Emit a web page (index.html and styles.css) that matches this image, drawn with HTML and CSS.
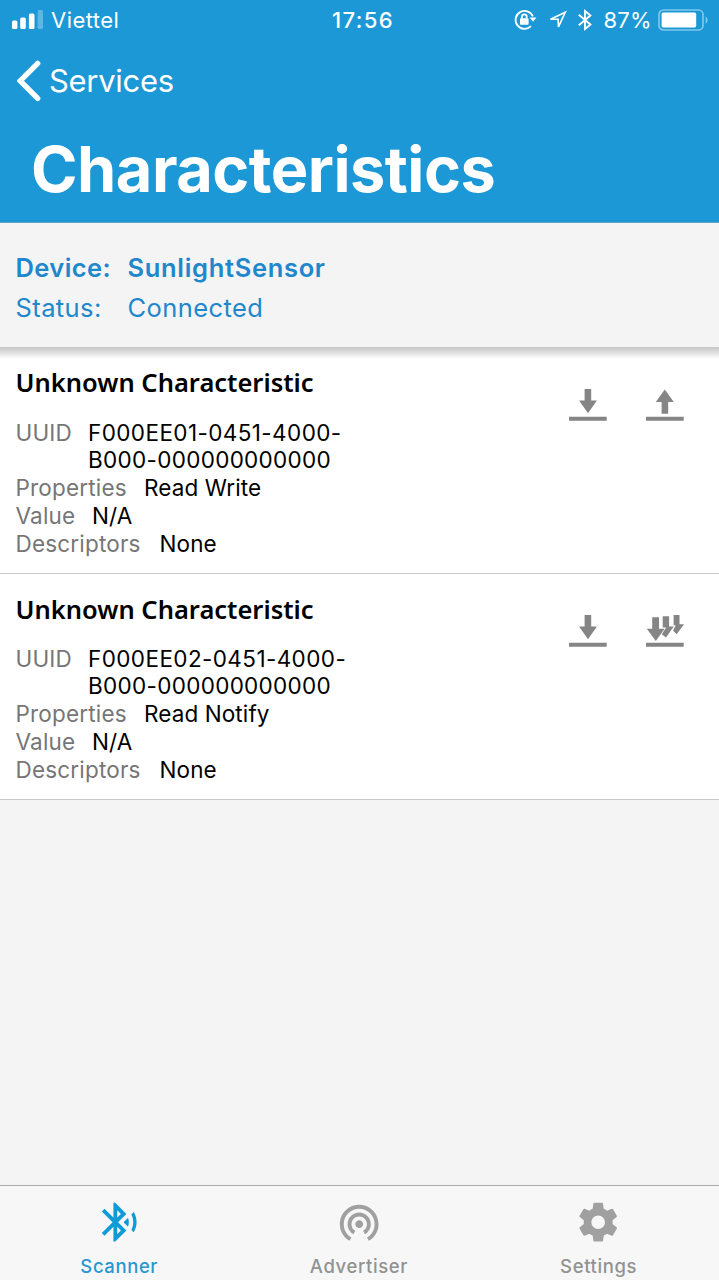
FILE: index.html
```html
<!DOCTYPE html>
<html lang="en">
<head>
<meta charset="utf-8">
<meta name="viewport" content="width=device-width, initial-scale=1">
<title>Characteristics</title>
<link rel="stylesheet" href="styles.css">
</head>
<body>
<div class="app">
  <header class="header">
    <div class="statusbar">
      <div class="carrier">
        <svg class="signal" width="32" height="20" viewBox="0 0 32 20" fill="#fff"><rect x="0" y="10.5" width="5.4" height="8.5" rx="1.5"/><rect x="8.2" y="7.5" width="5.6" height="11.5" rx="1.5"/><rect x="16.9" y="3.5" width="5.6" height="15.5" rx="1.5"/><rect x="25.6" y="0" width="5.4" height="19" rx="1.5" opacity=".3"/></svg>
        <span class="carrier-name">Viettel</span>
      </div>
      <div class="time">17:56</div>
      <div class="indicators">
        <svg class="lock" width="23" height="22" viewBox="0 0 23 22" fill="none" stroke="#fff" stroke-width="1.8"><path d="M18.9 7.4A9 9 0 1 0 17 17.2"/><path d="M15.6 8.4h6.8l-3.3 4.4z" fill="#fff" stroke="none"/><rect x="6" y="9.2" width="8.6" height="6.5" rx=".8" fill="#fff" stroke="none"/><path d="M7.9 9.5V7.7a2.4 2.4 0 0 1 4.8 0v1.8"/></svg>
        <svg class="location" width="20" height="20" viewBox="0 0 20 20" fill="none" stroke="#fff" stroke-width="1.6" stroke-linejoin="miter"><path d="M17.3 2.2 2.4 9.3h7.7l.4 7.6z"/></svg>
        <svg class="bt" width="14" height="22" viewBox="0 0 14 22" fill="none" stroke="#fff" stroke-width="1.9"><path d="M.8 5.8 12.4 15.6 7 20V2l5.4 4.4L.8 16.2"/></svg>
        <span class="percent">87%</span>
        <svg class="battery" width="51" height="22" viewBox="0 0 51 22"><rect x="1" y="1" width="44" height="20" rx="4.5" fill="none" stroke="#fff" stroke-opacity=".45" stroke-width="1.7"/><rect x="3.6" y="3.6" width="34.6" height="14.8" rx="1.6" fill="#fff"/><path d="M47.6 7.4c2.6 1 2.6 6.2 0 7.2z" fill="#fff" opacity=".45"/></svg>
      </div>
    </div>
    <div class="navbar">
      <svg class="chevron" width="25" height="42" viewBox="0 0 25 42" fill="none" stroke="#fff" stroke-width="5.4" stroke-linecap="round" stroke-linejoin="miter"><path d="M20.7 3.3 3.2 20.8 20.7 38.3"/></svg>
      <span class="back">Services</span>
    </div>
    <h1 class="title">Characteristics</h1>
  </header>

  <section class="device">
    <div class="device-row device-name"><span class="device-key">Device:</span><span class="device-value">SunlightSensor</span></div>
    <div class="device-row device-status"><span class="device-key">Status:</span><span class="device-value">Connected</span></div>
  </section>

  <main class="list">
    <article class="card">
      <div class="info">
        <h2 class="name">Unknown Characteristic</h2>
        <div class="row uuid"><span class="key k-uuid">UUID</span><span class="val">F000EE01-0451-4000-<br><span class="uuid-tail">B000-000000000000</span></span></div>
        <div class="row"><span class="key k-prop">Properties</span><span class="val">Read Write</span></div>
        <div class="row"><span class="key k-value">Value</span><span class="val">N/A</span></div>
        <div class="row"><span class="key k-desc">Descriptors</span><span class="val">None</span></div>
      </div>
      <div class="actions">
        <svg width="38" height="32" viewBox="0 0 38 32" fill="#858585"><path d="M15.6 0h6.6v11.6h5.7L19 24.2 10.1 11.6h5.5zM0 27.7h37.7v4H0z"/></svg>
        <svg width="38" height="32" viewBox="0 0 38 32" fill="#858585"><path d="M18.8.6l9 12.4h-5.6v11.8h-6.6V13H9.8zM0 27.7h37.7v4H0z"/></svg>
      </div>
    </article>
    <article class="card">
      <div class="info">
        <h2 class="name">Unknown Characteristic</h2>
        <div class="row uuid"><span class="key k-uuid">UUID</span><span class="val">F000EE02-0451-4000-<br><span class="uuid-tail">B000-000000000000</span></span></div>
        <div class="row"><span class="key k-prop">Properties</span><span class="val">Read Notify</span></div>
        <div class="row"><span class="key k-value">Value</span><span class="val">N/A</span></div>
        <div class="row"><span class="key k-desc">Descriptors</span><span class="val">None</span></div>
      </div>
      <div class="actions">
        <svg width="38" height="32" viewBox="0 0 38 32" fill="#858585"><path d="M15.6 0h6.6v11.6h5.7L19 24.2 10.1 11.6h5.5zM0 27.7h37.7v4H0z"/></svg>
        <svg width="38" height="32" viewBox="0 0 38 32" fill="#858585"><path d="M6.2 2.2H13v11.6h5.6L9.8 26 .8 13.8h5.4zM16.7 1.2h6.4v10.4h4.6L20 22.6l-4.2-3.4 4.4-6.8h-3.5zM27.6 0h5.9v9.2h4.5l-7.3 10-3.6-3.5 2.6-5.5h-2.1zM0 27.7h37.7v4H0z"/></svg>
      </div>
    </article>
  </main>

  <nav class="tabbar">
    <div class="tab active">
      <svg class="tab-icon" viewBox="0 0 24 24"><path d="M14.24 12.01l2.32 2.32c.28-.72.44-1.51.44-2.33 0-.82-.16-1.59-.43-2.31l-2.33 2.32zm5.29-5.3l-1.26 1.26c.63 1.21.98 2.57.98 4.02s-.36 2.82-.98 4.02l1.2 1.2c.97-1.54 1.54-3.36 1.54-5.31-.01-1.89-.55-3.67-1.48-5.19zm-3.82 1L10 2H9v7.59L4.41 5 3 6.41 8.59 12 3 17.59 4.41 19 9 14.41V22h1l5.71-5.71-4.3-4.29 4.3-4.29zM11 5.83l1.88 1.88L11 9.59V5.83zm1.88 10.46L11 18.17v-3.76l1.88 1.88z"/></svg>
      <span class="tab-label">Scanner</span>
    </div>
    <div class="tab">
      <svg class="tab-icon" viewBox="0 0 24 24"><path d="M12 11c-1.1 0-2 .9-2 2s.9 2 2 2 2-.9 2-2-.9-2-2-2zm6 2c0-3.31-2.69-6-6-6s-6 2.69-6 6c0 2.22 1.21 4.15 3 5.19l1-1.74c-1.19-.7-2-1.97-2-3.45 0-2.21 1.79-4 4-4s4 1.79 4 4c0 1.48-.81 2.75-2 3.45l1 1.74c1.79-1.04 3-2.97 3-5.19zM12 3C6.48 3 2 7.48 2 13c0 3.7 2.01 6.92 4.99 8.65l1-1.73C5.61 18.53 4 15.96 4 13c0-4.42 3.58-8 8-8s8 3.58 8 8c0 2.96-1.61 5.53-4 6.92l1 1.73c2.99-1.73 5-4.95 5-8.65 0-5.52-4.48-10-10-10z"/></svg>
      <span class="tab-label">Advertiser</span>
    </div>
    <div class="tab">
      <svg class="tab-icon" viewBox="0 0 24 24"><path d="M19.43 12.98c.04-.32.07-.64.07-.98s-.03-.66-.07-.98l2.11-1.65c.19-.15.24-.42.12-.64l-2-3.46c-.12-.22-.39-.3-.61-.22l-2.49 1c-.52-.4-1.08-.73-1.69-.98l-.38-2.65C14.46 2.18 14.25 2 14 2h-4c-.25 0-.46.18-.49.42l-.38 2.65c-.61.25-1.17.59-1.69.98l-2.49-1c-.23-.09-.49 0-.61.22l-2 3.46c-.13.22-.07.49.12.64l2.11 1.65c-.04.32-.07.65-.07.98s.03.66.07.98l-2.11 1.65c-.19.15-.24.42-.12.64l2 3.46c.12.22.39.3.61.22l2.49-1c.52.4 1.08.73 1.69.98l.38 2.65c.03.24.24.42.49.42h4c.25 0 .46-.18.49-.42l.38-2.65c.61-.25 1.17-.59 1.69-.98l2.49 1c.23.09.49 0 .61-.22l2-3.46c.12-.22.07-.49-.12-.64l-2.11-1.65zM12 15.5c-1.93 0-3.5-1.57-3.5-3.5s1.57-3.5 3.5-3.5 3.5 1.57 3.5 3.5-1.57 3.5-3.5 3.5z"/></svg>
      <span class="tab-label">Settings</span>
    </div>
  </nav>
</div>
</body>
</html>
```
FILE: styles.css
```css
* { box-sizing: border-box; margin: 0; padding: 0; }
body { font-family: Inter, "Liberation Sans", sans-serif; background: #f4f4f4; }
svg { display: block; flex: none; }
span { white-space: nowrap; }
.app { width: 719px; height: 1280px; display: flex; flex-direction: column; overflow: hidden; }

.header { height: 223px; background: #1b98d5; border-bottom: 1px solid #5fa6c8; color: #fff; flex: none; }
.statusbar { height: 40px; display: grid; grid-template-columns: 1fr auto 1fr; align-items: center; padding: 0 10px 0 12px; font-size: 22px; line-height: 40px; }
.carrier { display: flex; align-items: center; gap: 7px; }
.carrier-name { letter-spacing: .45px; }
.time { font-weight: 500; font-size: 22px; letter-spacing: 1.4px; padding-left: 5px; }
.indicators { display: flex; align-items: center; justify-content: flex-end; }
.location { margin-left: 11px; }
.bt { margin-left: 10px; }
.percent { margin-left: 11px; letter-spacing: .3px; }
.battery { margin: 0 0 0 6px; }
.navbar { height: 82px; display: flex; align-items: center; padding-left: 16.5px; }
.chevron { margin-right: 7.5px; }
.back { font-size: 31px; letter-spacing: -.3px; line-height: 40px; }
.title { padding-left: 31px; font-size: 63px; line-height: 94px; font-weight: 700; letter-spacing: -.5px; }

.device { height: 124px; flex: none; padding: 25px 0 0 15.5px; color: #1f87cb; background: #f4f4f4; font-size: 25.5px; }
.device-row { display: flex; height: 40px; line-height: 40px; letter-spacing: .4px; }
.device-key { width: 112px; }
.device-name { font-weight: 600; }
.device-name .device-value { letter-spacing: .68px; }

.list { flex: 1; }
.card { height: 226.5px; background: #fff; border-bottom: 1px solid #c8c8c8; display: flex; justify-content: space-between; padding: 19px 35.4px 0 15.5px; }
.card:first-child { background: linear-gradient(#c6c6c6, #dcdcdc 5px, #fff 12px); }
.card:last-child { padding-top: 19px; }
.name { font-family: "Noto Sans", "Open Sans", sans-serif; font-weight: 600; font-size: 25.5px; line-height: 32px; color: #000; margin-bottom: 21px; }
.card:last-child .name { margin-bottom: 20px; }
.row { display: flex; height: 28px; line-height: 28px; font-size: 22.5px; letter-spacing: .1px; }
.uuid { height: 55px; line-height: 27px; }
.card:last-child .uuid { height: 55.6px; }
.uuid .val { letter-spacing: .4px; }
.uuid .uuid-tail { letter-spacing: .3px; }
.key { color: #767676; letter-spacing: .18px; }
.val { color: #000; }
.k-uuid { width: 72.5px; }
.k-prop { width: 128.5px; }
.k-value { width: 76.5px; }
.k-desc { width: 144px; }
.actions { display: flex; gap: 39px; padding-top: 23px; }
.card:last-child .actions { padding-top: 22.5px; }

.tabbar { height: 95px; flex: none; background: #f7f7f7; border-top: 1px solid #a9aaaa; display: grid; grid-template-columns: repeat(3, 1fr); }
.tab { display: flex; flex-direction: column; align-items: center; padding: 13px 1.2px 0 0; color: #929292; }
.tab-icon { width: 46.4px; height: 46.4px; fill: #a0a0a0; }
.tab-label { font-size: 18.5px; font-weight: 500; line-height: 24px; margin-top: 9px; letter-spacing: .6px; }
.active { color: #2897cf; }
.active .tab-icon { fill: #109bd8; }
```
